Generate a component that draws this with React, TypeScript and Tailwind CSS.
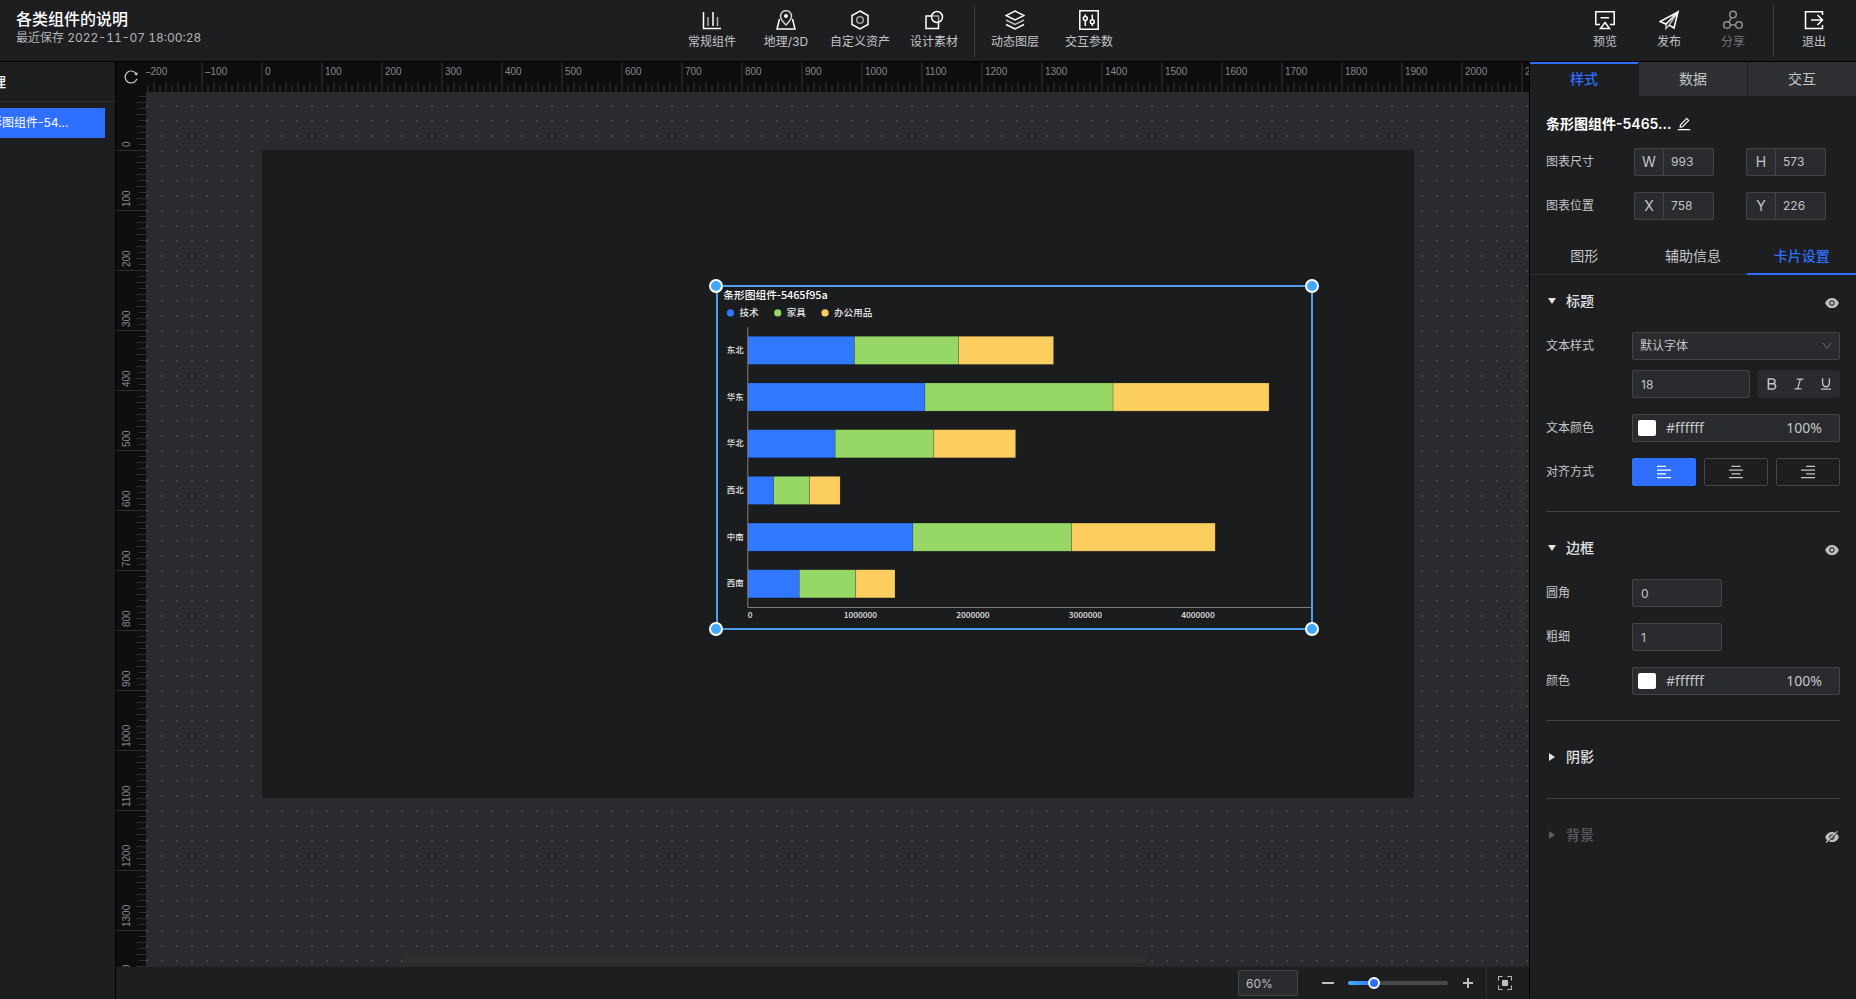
import type { ReactNode } from 'react';
import {
  AiFillEye,
  AiFillEyeInvisible,
  AiOutlineAlignCenter,
  AiOutlineAlignLeft,
  AiOutlineAlignRight,
  AiOutlineBold,
  AiOutlineDown,
  AiOutlineEdit,
  AiOutlineItalic,
  AiOutlineReload,
  AiOutlineUnderline,
} from 'react-icons/ai';

const ZOOM = 0.6;

function ToolIcon({ children }: { children: ReactNode }) {
  return (
    <svg width="20" height="20" viewBox="0 0 20 20" fill="none" stroke="currentColor" strokeWidth="1.5" aria-hidden="true">
      {children}
    </svg>
  );
}

const insertTools = [
  {
    label: '常规组件',
    icon: (
      <ToolIcon>
        <path d="M1.5 2v16.5H19M11 2v14" />
        <path d="M6 7v9M15.5 7v9" opacity="0.65" />
      </ToolIcon>
    ),
  },
  {
    label: '地理/3D',
    icon: (
      <ToolIcon>
        <path d="M3.5 9 1 19h18L16.5 9" />
        <path d="M10 15C6.500 11.500 4.500 9 4.500 6.200a5.500 5.500 0 0 1 11 0C15.500 9 13.500 11.500 10 15Z" opacity="0.8" />
        <circle cx="10" cy="6" r="2" fill="currentColor" stroke="none" />
      </ToolIcon>
    ),
  },
  {
    label: '自定义资产',
    icon: (
      <ToolIcon>
        <path d="m10 1 8 4.500v9L10 19l-8-4.500v-9Z" />
        <circle cx="10" cy="10" r="3.300" opacity="0.6" />
      </ToolIcon>
    ),
  },
  {
    label: '设计素材',
    icon: (
      <ToolIcon>
        <path d="M7 6H2v12.500h12.500V13" />
        <path d="M7 6h7.500v7" opacity="0.6" />
        <circle cx="13" cy="7" r="5.500" />
      </ToolIcon>
    ),
  },
];

const canvasTools = [
  {
    label: '动态图层',
    icon: (
      <ToolIcon>
        <path d="m10 1 9 4.500-9 4.500-9-4.500Z" />
        <path d="m1 10 9 4.500 9-4.500" opacity="0.7" />
        <path d="m1 14.500 9 4.500 9-4.500" />
      </ToolIcon>
    ),
  },
  {
    label: '交互参数',
    icon: (
      <ToolIcon>
        <path d="M.8.800h18.400v18.400H.8Z" />
        <path d="M6.300 4.500v2M6.300 10.500V16M13.300 4.500v5M13.300 14v2" />
        <circle cx="6.300" cy="8.500" r="2" />
        <circle cx="13.300" cy="11.800" r="2" />
      </ToolIcon>
    ),
  },
];

const pageActions = [
  {
    label: '预览',
    icon: (
      <ToolIcon>
        <path d="M5 14.500H.8V1.800h18.400v12.700H15M5.500 7.800h8.500" />
        <path d="m10 12.500 4.500 6h-9Z" />
      </ToolIcon>
    ),
  },
  {
    label: '发布',
    icon: (
      <ToolIcon>
        <path d="M19 2 1 11.500l6 2.500L19 2l-4 16-5-2.800" />
        <path d="M7 14v4.500l3-3.300L19 2" opacity="0.7" />
      </ToolIcon>
    ),
  },
  {
    label: '分享',
    disabled: true,
    icon: (
      <ToolIcon>
        <circle cx="10" cy="4.500" r="3.300" />
        <circle cx="4" cy="15" r="3.300" />
        <circle cx="16" cy="15" r="3.300" />
        <path d="M8.500 7.500 5.800 12.200M7.300 15h5.400" />
      </ToolIcon>
    ),
  },
];

const exitAction = {
  label: '退出',
  icon: (
    <ToolIcon>
      <path d="M18.500 5V1.800H1.500v16.700h17V15" />
      <path d="M7 10h11.500M13.500 5l5 5-5 5" />
    </ToolIcon>
  ),
};

function ToolButton({ label, icon, disabled, wide }: { label: string; icon: ReactNode; disabled?: boolean; wide?: boolean }) {
  return (
    <button
      type="button"
      disabled={disabled}
      className={`flex shrink-0 flex-col items-center gap-1 pb-[2px] text-white disabled:opacity-50 ${wide ? 'w-[74px]' : 'w-16'}`}
    >
      {icon}
      <span className="text-xs text-[#c4c5c6]">{label}</span>
    </button>
  );
}

function Header() {
  return (
    <header className="flex h-[62px] shrink-0 border-b border-black">
      <div className="flex-1 pt-2 pl-4">
        <h1 className="text-base leading-[22px] font-medium text-white">各类组件的说明</h1>
        <p className="text-xs text-[#b4b5b6] tabular-nums">最近保存 2022-11-07 18:00:28</p>
      </div>
      <nav className="flex items-center">
        {insertTools.map((tool) => (
          <ToolButton key={tool.label} {...tool} wide />
        ))}
        <div className="mx-[3px] h-[52px] w-px bg-[#3f4042]" />
        {canvasTools.map((tool) => (
          <ToolButton key={tool.label} {...tool} wide />
        ))}
      </nav>
      <div className="flex w-[730px] items-center justify-end pr-[10px]">
        {pageActions.map((tool) => (
          <ToolButton key={tool.label} {...tool} />
        ))}
        <div className="mx-2 h-[52px] w-px bg-[#3f4042]" />
        <ToolButton {...exitAction} />
      </div>
    </header>
  );
}

function LayerPanel() {
  return (
    <aside className="flex w-[116px] shrink-0 justify-end overflow-hidden border-r border-black">
      <div className="w-[165px] shrink-0">
        <h2 className="h-10 border-b border-[#303133] text-sm leading-10 font-medium text-white">图层管理</h2>
        <button type="button" className="mt-[6px] flex h-[30px] w-[155px] items-center bg-[#2f6fff] pl-7 text-xs text-white">
          条形图组件-54...
        </button>
      </div>
    </aside>
  );
}

function tickLength(index: number) {
  if (index % 10 === 0) return 30;
  return index % 2 === 0 ? 10 : 7;
}

// Ruler values are canvas units; one tick every 10 units, one label every 100.
function Ruler({ vertical, origin, from, to }: { vertical?: boolean; origin: number; from: number; to: number }) {
  const ticks = Array.from({ length: (to - from) / 10 + 1 }, (_, i) => from / 10 + i);
  return (
    <svg
      className={vertical ? 'h-full w-[30px] shrink-0 bg-[#0e0e0f]' : 'h-[30px] w-full bg-[#0e0e0f]'}
      fontSize="10"
      fill="#848990"
      fontFamily="Liberation Sans, sans-serif"
      aria-hidden="true"
    >
      {ticks.map((index) => {
        const pos = origin + index * 10 * ZOOM;
        const length = tickLength(index);
        return vertical ? (
          <rect key={index} x={30 - length} y={pos} width={length} height="1" fill="#303030" />
        ) : (
          <rect key={index} x={pos} y={30 - length} width="2" height={length} fill="#222222" />
        );
      })}
      {ticks
        .filter((index) => index % 10 === 0)
        .map((index) => {
          const pos = origin + index * 10 * ZOOM;
          const text = String(index * 10).replace('-', '–');
          return vertical ? (
            <text key={index} transform={`translate(14 ${pos - 3}) rotate(-90)`}>
              {text}
            </text>
          ) : (
            <text key={index} x={pos + 4} y="13">
              {text}
            </text>
          );
        })}
    </svg>
  );
}

const series = [
  { name: '技术', color: '#2f78ff', legendX: 22 },
  { name: '家具', color: '#97d765', legendX: 101 },
  { name: '办公用品', color: '#fcce60', legendX: 180 },
];

// sales in thousands, in series order
const regions = [
  { name: '东北', sales: [947, 925, 845] },
  { name: '华东', sales: [1574, 1672, 1386] },
  { name: '华北', sales: [776, 877, 727] },
  { name: '西北', sales: [229, 319, 272] },
  { name: '中南', sales: [1467, 1410, 1276] },
  { name: '西南', sales: [457, 502, 349] },
];

const PLOT_LEFT = 51;
const PLOT_TOP = 69;
const BAND = 78;
const UNIT = 0.188;

function BarChart() {
  return (
    <svg viewBox="0 0 993 573" className="block h-full w-full" fill="#e4e4e4" fontFamily="Noto Sans CJK SC, sans-serif" role="img" aria-label="条形图组件">
      <text x="10" y="21" fontSize="18" fontWeight="500" fill="#ffffff">
        条形图组件-5465f95a
      </text>
      {series.map((s) => (
        <g key={s.name}>
          <circle cx={s.legendX} cy="45" r="6" fill={s.color} />
          <text x={s.legendX + 15} y="50" fontSize="16" fontWeight="500">
            {s.name}
          </text>
        </g>
      ))}
      {regions.map((region, row) => {
        const top = PLOT_TOP + row * BAND;
        let start = PLOT_LEFT;
        return (
          <g key={region.name}>
            <text x="44" y={top + 43} fontSize="14" fontWeight="500" textAnchor="end">
              {region.name}
            </text>
            {region.sales.map((value, i) => {
              const x = start;
              start += value * UNIT;
              return (
                <rect
                  key={series[i].name}
                  x={x}
                  y={top + 15}
                  width={value * UNIT}
                  height="47"
                  fill={series[i].color}
                  stroke="#000000"
                  strokeOpacity="0.25"
                />
              );
            })}
          </g>
        );
      })}
      <path d="M51 69V537H993" fill="none" stroke="#8b8b8e" strokeWidth="1.500" />
      {[0, 1, 2, 3, 4].map((million) => (
        <text key={million} x={million === 0 ? 55 : PLOT_LEFT + million * 188} y="554" fontSize="14" fontWeight="500" textAnchor="middle">
          {million * 1000000}
        </text>
      ))}
    </svg>
  );
}

function Handle({ className }: { className: string }) {
  return <span className={`absolute size-[14px] rounded-full border-2 border-white bg-[#40a9ff] ${className}`} />;
}

function Stage() {
  return (
    <div className="relative flex-1 overflow-hidden bg-[#2a2b2f] bg-[conic-gradient(from_270deg_at_2px_2px,#45464b_90deg,transparent_0)] bg-[length:15px_15px] bg-[position:0_13px]">
      <div className="absolute top-[58px] left-[116px] h-[648px] w-[1152px] bg-[#1b1c1e]">
        <div className="absolute top-[136px] left-[455px] h-[343px] w-[595px] outline-2 -outline-offset-1 outline-[#4c9fe8]">
          <BarChart />
          <Handle className="-top-[7px] -left-2" />
          <Handle className="-top-[7px] -right-[7px]" />
          <Handle className="-bottom-[7px] -left-2" />
          <Handle className="-right-[7px] -bottom-[7px]" />
        </div>
      </div>
      <div className="absolute top-[201px] right-1 h-[417px] w-[6px] rounded-full bg-[#303031]" />
      <div className="absolute bottom-1 left-[258px] h-[6px] w-[742px] rounded-full bg-[#303031]" />
    </div>
  );
}

function ZoomBar() {
  return (
    <footer className="flex h-8 shrink-0 items-center justify-end text-[#bebfc0]">
      <input
        aria-label="缩放比例"
        defaultValue="60%"
        className="h-[26px] w-[60px] rounded-xs border border-[#434446] bg-[#2a2b2f] px-[7px] text-xs outline-none"
      />
      <button type="button" aria-label="缩小" className="ml-6 flex h-4 w-3 items-center">
        <span className="h-[2px] w-full bg-current" />
      </button>
      <input
        type="range"
        aria-label="缩放"
        defaultValue={23}
        className="mx-[14px] h-1 w-[100px] appearance-none rounded-full bg-[linear-gradient(90deg,#40b4ff,#2f6fff_26%,#47484c_26%)] outline-none [&::-webkit-slider-thumb]:size-3 [&::-webkit-slider-thumb]:appearance-none [&::-webkit-slider-thumb]:rounded-full [&::-webkit-slider-thumb]:border-2 [&::-webkit-slider-thumb]:border-white [&::-webkit-slider-thumb]:bg-[#2f6fff]"
      />
      <button type="button" aria-label="放大">
        <svg width="12" height="12" viewBox="0 0 12 12" fill="none" stroke="currentColor" strokeWidth="2">
          <path d="M6 1v10M1 6h10" />
        </svg>
      </button>
      <button type="button" aria-label="适应画布" className="ml-3 flex h-full w-[43px] items-center border-l border-[#303133] pl-[11px]">
        <svg width="14" height="14" viewBox="0 0 14 14" fill="none" stroke="currentColor">
          <path d="M.5 4.500v-4h4M9.500.500h4v4M13.500 9.500v4h-4M4.500 13.500h-4v-4" />
          <rect x="4" y="4" width="6" height="6" rx="1" fill="currentColor" stroke="none" />
        </svg>
      </button>
    </footer>
  );
}

const field = 'h-7 rounded-xs border border-[#434446] bg-[#2a2b2f] text-xs text-[#c4c5c6] outline-none';

function SizeField({ name, value, label }: { name: string; value: string; label: string }) {
  return (
    <label className="flex h-7 w-20 overflow-hidden rounded-xs border border-[#434446] bg-[#2a2b2f] text-[#c4c5c6]">
      <span className="w-[29px] shrink-0 border-r border-[#434446] text-center text-sm leading-[26px]">{name}</span>
      <input aria-label={label} defaultValue={value} className="w-full min-w-0 pl-[7px] text-xs outline-none" />
    </label>
  );
}

function SizeRow({ label, children }: { label: string; children: ReactNode }) {
  return (
    <div className="flex h-7 items-center">
      <span className="w-[88px] text-xs">{label}</span>
      <div className="flex gap-8">{children}</div>
    </div>
  );
}

function Row({ label, htmlFor, children }: { label: string; htmlFor?: string; children: ReactNode }) {
  return (
    <div className="flex items-center">
      <label htmlFor={htmlFor} className="w-[86px] shrink-0 text-xs">
        {label}
      </label>
      <div className="flex min-w-0 flex-1 gap-2">{children}</div>
    </div>
  );
}

function ColorField({ id }: { id: string }) {
  return (
    <div className="flex h-7 w-full items-center rounded-xs border border-[#434446] bg-[#2a2b2f] px-[5px] font-['Noto_Sans'] text-sm text-[#c4c5c6]">
      <button type="button" aria-label="选择颜色" className="h-4 w-[18px] shrink-0 rounded-xs bg-white" />
      <input id={id} defaultValue="#ffffff" className="ml-[10px] w-20 min-w-0 outline-none" />
      <input aria-label="不透明度" defaultValue="100%" className="mr-3 ml-auto w-14 min-w-0 text-right outline-none" />
    </div>
  );
}

function Section({ title, open, dim, eye, children }: { title: string; open?: boolean; dim?: boolean; eye?: 'on' | 'off'; children?: ReactNode }) {
  return (
    <section className="border-t border-[#3f4042] pt-[26px] pb-[25px] first:border-t-0 first:pt-0">
      <div className="flex h-5 items-center">
        <button type="button" aria-expanded={!!open} className={`flex items-center text-sm font-medium ${dim ? 'text-[#5c5d5f]' : 'text-[#e2e2e3]'}`}>
          <svg width="8" height="8" viewBox="0 0 8 8" fill="currentColor" className="mr-[10px] ml-[2px]" aria-hidden="true">
            <path d={open ? 'M0 1h8L4 7Z' : 'M1 0l6 4-6 4Z'} />
          </svg>
          {title}
        </button>
        {eye && (
          <button type="button" aria-label={eye === 'on' ? '隐藏' : '显示'} className="mt-1 ml-auto text-[#bebfc0]">
            {eye === 'on' ? <AiFillEye size={16} /> : <AiFillEyeInvisible size={16} />}
          </button>
        )}
      </div>
      {children ? <div className="mt-[21px] flex flex-col gap-4">{children}</div> : <div className="h-[6px]" />}
    </section>
  );
}

function Inspector() {
  return (
    <aside className="w-[327px] shrink-0 border-l border-black text-[#c4c5c6]">
      <div className="grid h-[34px] grid-cols-3 gap-px text-sm">
        <button type="button" className="border-t-2 border-[#2f6fff] pb-[2px] font-medium text-[#2f6fff]">
          样式
        </button>
        <button type="button" className="bg-[#2f3034]">数据</button>
        <button type="button" className="bg-[#2f3034]">交互</button>
      </div>

      <div className="flex flex-col gap-4 px-4 pt-5">
        <div className="flex h-4 items-center gap-[5px] text-white">
          <span className="text-sm font-semibold">条形图组件-5465...</span>
          <button type="button" aria-label="重命名">
            <AiOutlineEdit size={16} />
          </button>
        </div>
        <SizeRow label="图表尺寸">
          <SizeField name="W" value="993" label="宽度" />
          <SizeField name="H" value="573" label="高度" />
        </SizeRow>
        <SizeRow label="图表位置">
          <SizeField name="X" value="758" label="横坐标" />
          <SizeField name="Y" value="226" label="纵坐标" />
        </SizeRow>
      </div>

      <div className="mt-4 grid h-[39px] grid-cols-3 border-b border-[#303133] text-sm">
        <button type="button" className="pt-[2px]">
          图形
        </button>
        <button type="button" className="pt-[2px]">
          辅助信息
        </button>
        <button type="button" className="-mb-px border-b-2 border-[#2f6fff] pt-[2px] font-medium text-[#2f6fff]">
          卡片设置
        </button>
      </div>

      <div className="px-4 pt-4">
        <Section title="标题" open eye="on">
          <div className="flex flex-col gap-[10px]">
            <Row label="文本样式" htmlFor="font-family">
              <div className="relative w-full">
                <select id="font-family" className={`${field} w-full appearance-none pl-[7px]`}>
                  <option>默认字体</option>
                </select>
                <AiOutlineDown size={12} className="pointer-events-none absolute top-2 right-[7px] text-[#66676a]" />
              </div>
            </Row>
            <div className="flex gap-2 pl-[86px]">
              <input aria-label="字号" defaultValue="18" className={`${field} min-w-0 flex-1 px-2`} />
              <div className="flex h-7 w-[82px] items-center justify-around rounded-xs bg-[#2a2b2f]">
                <button type="button" aria-label="加粗">
                  <AiOutlineBold size={16} />
                </button>
                <button type="button" aria-label="斜体">
                  <AiOutlineItalic size={16} />
                </button>
                <button type="button" aria-label="下划线">
                  <AiOutlineUnderline size={16} />
                </button>
              </div>
            </div>
          </div>
          <Row label="文本颜色" htmlFor="text-color">
            <ColorField id="text-color" />
          </Row>
          <Row label="对齐方式">
            <button
              type="button"
              aria-label="左对齐"
              className="flex h-7 flex-1 items-center justify-center rounded-xs border border-[#2f6fff] bg-[#2f6fff] text-white"
            >
              <AiOutlineAlignLeft size={18} />
            </button>
            <button type="button" aria-label="居中" className="flex h-7 flex-1 items-center justify-center rounded-xs border border-[#434446]">
              <AiOutlineAlignCenter size={18} />
            </button>
            <button type="button" aria-label="右对齐" className="flex h-7 flex-1 items-center justify-center rounded-xs border border-[#434446]">
              <AiOutlineAlignRight size={18} />
            </button>
          </Row>
        </Section>

        <Section title="边框" open eye="on">
          <Row label="圆角" htmlFor="radius">
            <input id="radius" defaultValue="0" className={`${field} w-[90px] px-2`} />
          </Row>
          <Row label="粗细" htmlFor="thickness">
            <input id="thickness" defaultValue="1" className={`${field} w-[90px] px-2`} />
          </Row>
          <Row label="颜色" htmlFor="border-color">
            <ColorField id="border-color" />
          </Row>
        </Section>

        <Section title="阴影" />
        <Section title="背景" dim eye="off" />
      </div>
    </aside>
  );
}

export default function App() {
  return (
    <div className="flex h-screen flex-col overflow-hidden bg-[#1d1e20] font-['Inter','Noto_Sans_CJK_SC',sans-serif]">
      <Header />
      <div className="flex min-h-0 flex-1">
        <LayerPanel />
        <main className="flex min-w-0 flex-1 flex-col">
          <div className="flex h-[30px] shrink-0 bg-[#0e0e0f]">
            <button type="button" aria-label="重置视图" className="flex w-[30px] shrink-0 items-center justify-center text-[#d0d0d0]">
              <AiOutlineReload size={16} />
            </button>
            <div className="min-w-0 flex-1">
              <Ruler origin={115} from={-200} to={2100} />
            </div>
          </div>
          <div className="flex min-h-0 flex-1">
            <Ruler vertical origin={58} from={-90} to={1400} />
            <Stage />
          </div>
          <ZoomBar />
        </main>
        <Inspector />
      </div>
    </div>
  );
}
